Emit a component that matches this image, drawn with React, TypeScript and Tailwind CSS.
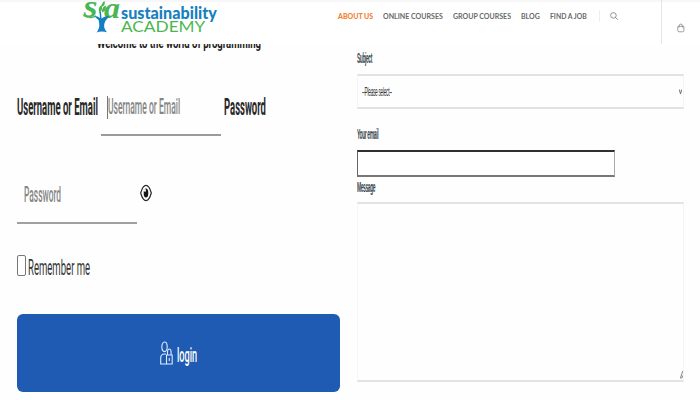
import { useLayoutEffect, useRef, useState } from "react";

type FitProps = { text: string; className: string };

// Condenses or stretches a line of text to the width of its box.
function Fit({ text, className }: FitProps) {
  const box = useRef<HTMLSpanElement>(null);
  const line = useRef<HTMLSpanElement>(null);
  const [scale, setScale] = useState(1);
  useLayoutEffect(() => {
    const measure = () => {
      if (box.current && line.current) setScale(box.current.offsetWidth / line.current.offsetWidth);
    };
    measure();
    document.fonts.ready.then(measure);
  }, []);
  return (
    <span ref={box} className={`block shrink-0 whitespace-nowrap ${className}`}>
      <span ref={line} className="inline-block origin-left" style={{ transform: `scaleX(${scale})` }}>
        {text}
      </span>
    </span>
  );
}

function Logo() {
  return (
    <div className="flex w-[136px] shrink-0">
      <svg viewBox="0 0 39 34" className="h-[34px] w-[39px] shrink-0 overflow-visible" aria-hidden="true">
        <text x="1.500" y="17" fontFamily="Liberation Serif, serif" fontStyle="italic" fontWeight="bold" fontSize="31" textLength="14" lengthAdjust="spacingAndGlyphs" fill="#4ab553">s</text>
        <text x="22" y="17.500" fontFamily="Liberation Serif, serif" fontStyle="italic" fontWeight="bold" fontSize="30" textLength="16" lengthAdjust="spacingAndGlyphs" fill="#4ab553">a</text>
        <path d="M0 13.500c3 3.500 6 4.500 11 3l3-1.500-1 2C9 19.500 3 18.500 0 13.500Z" fill="#4ab553" />
        <path d="M17.500 13c-1.500-4-.5-6 2-8 1 4 .5 6-2 8ZM19.500 7c0-3 1-5 3-6 1 3 0 5-3 6ZM20 12.500c0-4 1-6 4-7 0 4-1 6-4 7Z" fill="#4ab553" />
        <path d="M17.500 12l.5 6c-1.500-1.200-3-2-6-2l4.500 4c1.500 5 1 9-2 12.500 3-1.200 7-1.200 10.500-.3-3.500-4-3.500-7.500-1.500-11.500l4-4.700c-4 0-6 1.200-8 2.500l-.5-6.500Z" fill="#137fc2" />
      </svg>
      <div className="flex w-[97px] flex-col">
        <Fit text="sustainability" className="mt-[3px] h-4 w-[96px] font-['Lato',sans-serif] text-[17px] leading-5 font-black text-[#187fc0]" />
        <Fit text="ACADEMY" className="-mt-px h-[15px] w-[84px] font-['Lato',sans-serif] text-[16px] leading-[15px] text-[#4cb750]" />
      </div>
    </div>
  );
}

function Header() {
  const item = "h-[10px] font-['Lato',sans-serif] text-[7.4px] leading-[10px] font-bold text-[#686868]";
  return (
    <header className="relative z-10 flex h-11 shrink-0 border-t-2 border-[#f7f7f7] bg-white pl-[82px]">
      <div className="-mt-0.5 flex">
        <Logo />
      </div>
      <nav className="ml-[120px] flex h-[10px] pt-[10px]">
        <Fit text="ABOUT US" className="mr-[10px] h-[10px] w-[35px] font-['Lato',sans-serif] text-[7.4px] leading-[10px] font-black text-[#f28032]" />
        <Fit text="ONLINE COURSES" className={`${item} mr-[10px] w-[60px]`} />
        <Fit text="GROUP COURSES" className={`${item} mr-[10px] w-[58px]`} />
        <Fit text="BLOG" className={`${item} mr-[10px] w-[19px]`} />
        <Fit text="FIND A JOB" className={`${item} w-[37px]`} />
      </nav>
      <div className="mt-2 ml-[12px] h-3 w-px bg-[#eeeeee]" />
      <svg viewBox="0 0 8 8" className="mt-[10px] ml-[10px] h-2 w-2 shrink-0" fill="none" stroke="#777777" strokeWidth=".8">
        <circle cx="3.4" cy="3.4" r="2.8" />
        <path d="M5.5 5.5 7.7 7.7" />
      </svg>
      <div className="-mt-0.5 ml-[43px] h-11 w-px bg-[#e5e5e5]" />
      <svg viewBox="0 0 8 10" className="mt-[21px] ml-[15px] h-[10px] w-2 shrink-0" fill="none" stroke="#858585" strokeWidth=".8">
        <path d="M.8 3.300h6.100v4.200q0 1.300-1.300 1.300H2.100Q.8 8.800.8 7.500ZM2.200 4.500V2.600q0-1.500 1.600-1.500t1.600 1.500v1.900" />
      </svg>
    </header>
  );
}

function LoginForm() {
  return (
    <section className="flex w-[357px] shrink-0 flex-col pl-[17px] font-['Roboto',sans-serif]">
      <Fit text="Welcome to the world of programming" className="-mt-[9px] ml-[80px] h-[21px] w-[164px] text-[15px] leading-[17px] font-bold text-[#222222]" />
      <div className="mt-[23px] flex h-[57px]">
        <Fit text="Username or Email" className="mt-3 h-8 w-[81px] text-[23.5px] leading-8 font-bold text-[#282828]" />
        <div className="ml-[3px] flex w-[120px] border-b-2 border-[#9a9a9a] pl-[6px]">
          <div className="mt-[17px] h-[23px] w-px bg-[#777777]" />
          <Fit text="Username or Email" className="mt-3 h-8 w-[72px] text-[22px] leading-8 font-medium text-[#858585]" />
        </div>
        <Fit text="Password" className="mt-3 ml-[3px] h-8 w-[42px] text-[23.5px] leading-8 font-bold text-[#282828]" />
      </div>
      <div className="mt-[30px] flex h-[58px]">
        <div className="w-[120px] border-b-2 border-[#a0a0a0] pl-[7px]">
          <Fit text="Password" className="mt-[13px] h-8 w-[37px] text-[22px] leading-8 font-medium text-[#858585]" />
        </div>
        <svg viewBox="0 0 12 20" className="mt-[17px] ml-[3px] h-5 w-3" fill="none">
          <path d="M.7 10C3.500-.2 8.500-.2 11.300 10C8.500 20.200 3.500 20.200.7 10Z" stroke="#292929" strokeWidth="1.200" />
          <ellipse cx="6" cy="10" rx="2.300" ry="4.500" fill="#171717" />
          <ellipse cx="5" cy="7.300" rx=".9" ry="1.600" fill="#ffffff" />
        </svg>
      </div>
      <div className="mt-[31px] flex h-6">
        <div className="h-[21px] w-[9px] rounded-[2px] border border-[#777777] bg-white" />
        <Fit text="Remember me" className="-mt-[3px] ml-[2px] h-8 w-[62px] text-[22px] leading-8 text-[#343434]" />
      </div>
      <button className="mt-[35px] flex h-[78px] w-[323px] items-start rounded-[6px] bg-[#1f5bb2] pl-[143px] text-white">
        <svg viewBox="0 0 13 25" className="mt-[27px] h-[25px] w-[13px]" fill="none" stroke="#d9e9ff" strokeWidth="1.100">
          <ellipse cx="4.500" cy="5.800" rx="2.700" ry="4.800" />
          <path d="M6 23H.7v-6q0-4 4-4H6M6.500 14h5.700v9H6.500ZM7.500 14v-3q0-3 1.800-3t1.800 3v3M9.300 17v3" />
        </svg>
        <Fit text="login" className="mt-[26px] ml-1 h-[30px] w-5 text-left text-[21px] leading-[30px] font-medium" />
      </button>
    </section>
  );
}

function ContactForm() {
  const label = "h-4 font-['Liberation_Sans',sans-serif] text-[14px] leading-4 font-bold tracking-[-0.08em] text-[#37474d]";
  return (
    <section className="flex w-[327px] shrink-0 flex-col">
      <Fit text="Subject" className={`${label} mt-[6px] w-[15px]`} />
      <div className="mt-2 flex h-[35px] justify-between border-x border-y-2 border-x-[#f4f4f4] border-y-[#e2e2e2] pr-px pl-1">
        <Fit text="--Please select--" className="mt-[8px] h-4 w-[30px] font-['Liberation_Sans',sans-serif] text-[13.5px] leading-4 tracking-[-0.06em] text-[#333333]" />
        <svg viewBox="0 0 3 6" className="mt-[13px] h-[6px] w-[3px]" fill="none" stroke="#666666" strokeWidth=".9">
          <path d="m.3.500 1.200 4.500L2.700.500" />
        </svg>
      </div>
      <Fit text="Your email" className={`${label} mt-[17px] w-[21px]`} />
      <div className="mt-2 h-[27px] w-[258px] border border-t-2 border-b-2 border-t-[#303030] border-r-[#aaaaaa] border-b-[#777777] border-l-[#666666] bg-white" />
      <Fit text="Message" className={`${label} mt-[2px] w-[18px]`} />
      <div className="mt-[7px] flex h-[180px] items-end justify-end border-x border-y-2 border-x-[#f5f5f5] border-y-[#e3e3e3]">
        <svg viewBox="0 0 3 9" className="mb-[1px] h-[9px] w-[3px]" fill="none" stroke="#666666" strokeWidth=".8">
          <path d="M.3 8.500 2.700 1M1.700 8.500l1-3" />
        </svg>
      </div>
    </section>
  );
}

export default function App() {
  return (
    <div className="flex h-[400px] w-[700px] flex-col overflow-hidden bg-white">
      <Header />
      <main className="flex h-[356px] bg-[#fefefe]">
        <LoginForm />
        <ContactForm />
      </main>
    </div>
  );
}
